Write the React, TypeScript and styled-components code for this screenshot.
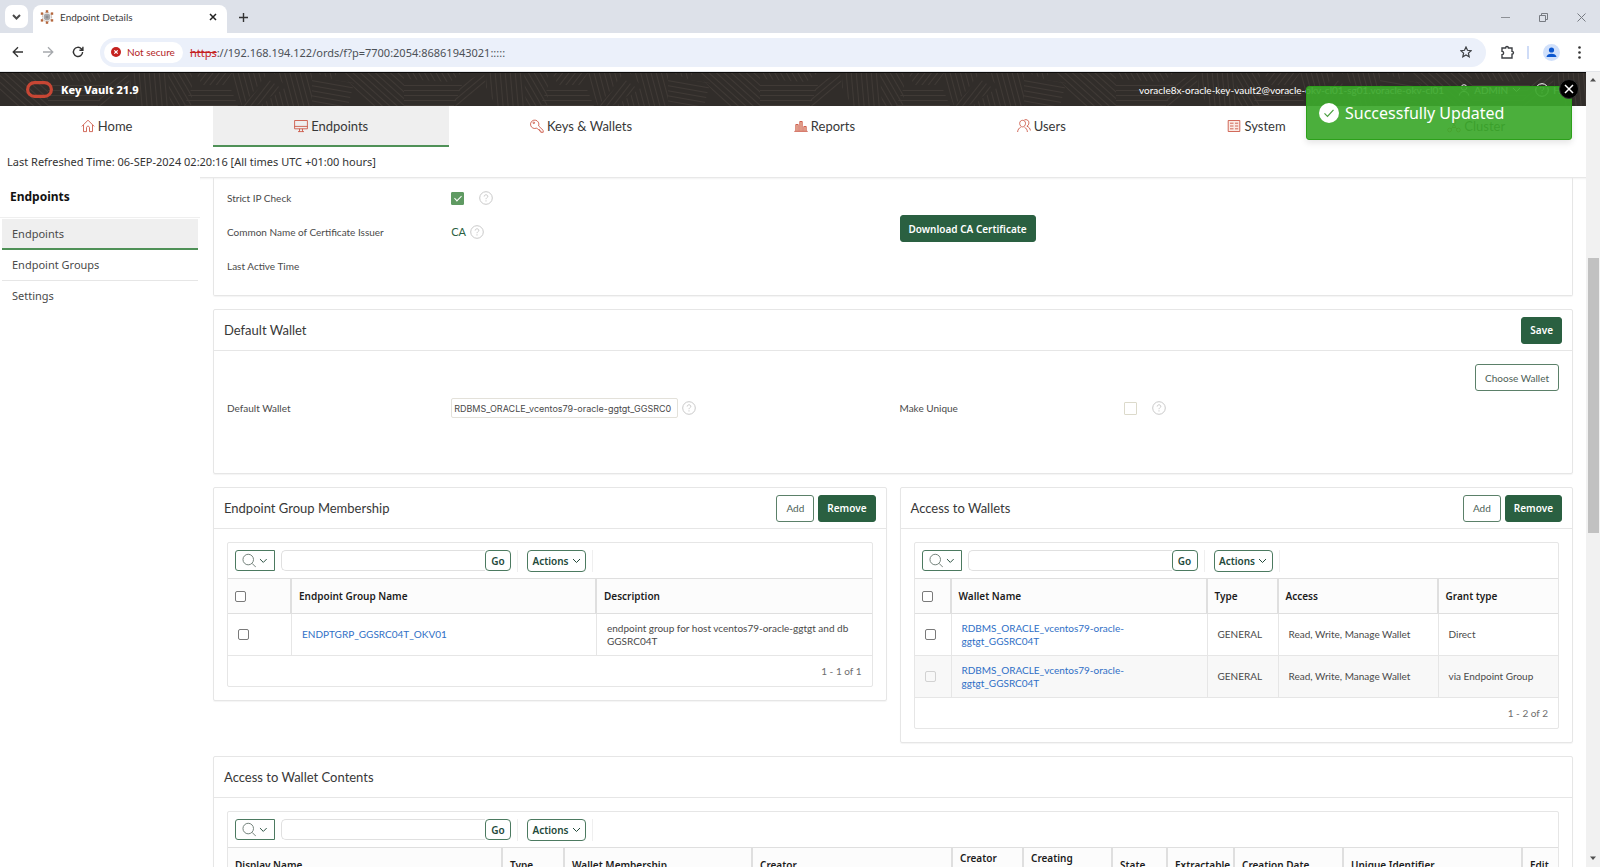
import React, { useId } from "react";
import styled, { createGlobalStyle, css } from "styled-components";

const color = {
  green: "#2a6041",
  accent: "#4f9157",
  line: "#e6e6e6",
  headLine: "#dfdfdf",
  red: "#c74634",
  link: "#2f6fc6",
  text: "#4a4a4a",
};
const bodyFont = `"Noto Sans", "Segoe UI", sans-serif`;
const smallFont = `Lato, "Segoe UI", sans-serif`;

const GlobalStyle = createGlobalStyle`
  *, *::before, *::after { box-sizing: border-box; }
  body { margin: 0; background: #fff; color: ${color.text}; font-family: ${bodyFont}; font-size: 11px; }
  button, input { font: inherit; color: inherit; margin: 0; }
  button { cursor: pointer; }
  a { color: inherit; text-decoration: none; }
  h1, h2, p, ul { margin: 0; padding: 0; font-weight: 400; }
  ul { list-style: none; }
`;

/* ---------- browser frame ---------- */

const Window = styled.div`
  display: flex;
  flex-direction: column;
  height: 100vh;
  overflow: hidden;
`;

const TabStrip = styled.div`
  display: flex;
  align-items: flex-end;
  flex: none;
  height: 33px;
  padding-left: 5px;
  background: #dde1e9;
`;

const IconButton = styled.button<{ $w?: number; $h?: number }>`
  display: flex;
  align-items: center;
  justify-content: center;
  flex: none;
  width: ${(p) => p.$w ?? 30}px;
  height: ${(p) => p.$h ?? 28}px;
  padding: 0;
  border: 0;
  background: transparent;
`;

const TabSearch = styled(IconButton)`
  margin-bottom: 5px;
  border-radius: 7px;
  background: #fff;
`;

const BrowserTab = styled.div`
  display: flex;
  align-items: center;
  gap: 6px;
  width: 194px;
  height: 28px;
  margin-left: 5px;
  padding: 0 7px;
  padding-bottom: 4px;
  border-radius: 8px 8px 0 0;
  background: #fff;
  font: 10px/14px ${smallFont};
  color: #3c3c3c;
`;

const TabTitle = styled.span`
  flex: 1;
`;

const NewTab = styled(IconButton)`
  margin-bottom: 2px;
`;

const WindowButtons = styled.div`
  display: flex;
  gap: 10px;
  margin-left: auto;
  padding: 0 5px 2px 0;
`;

const AddressRow = styled.div`
  display: flex;
  align-items: center;
  flex: none;
  height: 39px;
  padding: 0 7px 0 3px;
  border-bottom: 1px solid #e3e5e9;
  background: #fff;
`;

const AddressBar = styled.div`
  display: flex;
  align-items: center;
  flex: 1;
  height: 29px;
  margin: 0 6px 0 7px;
  padding: 0 5px 0 4px;
  border-radius: 15px;
  background: #ebf0fa;
  color: #4c5157;
`;

const SecurityChip = styled.button`
  display: flex;
  align-items: center;
  gap: 6px;
  height: 21px;
  margin-right: 7px;
  padding: 0 8px 0 7px;
  border: 0;
  border-radius: 11px;
  background: #fff;
  color: #b3261e;
  font: 10px/14px ${smallFont};
`;

const Scheme = styled.s`
  color: #c5221f;
`;

const AddressInput = styled.input`
  flex: 1;
  padding: 0;
  border: 0;
  outline: 0;
  background: transparent;
`;

const ToolbarDivider = styled.span`
  width: 2px;
  height: 13px;
  margin: 0 8px 0 5px;
  background: #cfdcf7;
`;

const Viewport = styled.div`
  display: flex;
  flex: 1;
  min-height: 0;
`;

const ScrollTrack = styled.div`
  display: flex;
  flex-direction: column;
  align-items: center;
  width: 14px;
  padding: 5px 0 6px;
  background: #f1f1f1;
`;
const ScrollGap = styled.div<{ $grow: number }>`
  flex: ${(p) => p.$grow} 0 0;
`;
const ScrollThumb = styled.div`
  flex: 274 0 0;
  width: 11px;
  background: #c1c1c1;
`;

/* ---------- application frame ---------- */

const AppPage = styled.div`
  position: relative;
  display: flex;
  flex-direction: column;
  flex: 1;
  min-width: 0;
`;

const Banner = styled.header`
  position: relative;
  display: flex;
  align-items: center;
  flex: none;
  height: 34px;
  padding: 0 12px 0 26px;
  border-top: 1px solid #0c0b0a;
  background: #312d2a;
  color: #fff;
`;

const BannerArt = styled.svg`
  position: absolute;
  inset: 0;
  width: 100%;
  height: 100%;
`;

const Product = styled.h1`
  display: flex;
  align-items: center;
  gap: 8px;
  position: relative;
  font-size: 11px;
  line-height: 16px;
  font-weight: 800;
`;

const Account = styled.div`
  position: relative;
  display: flex;
  align-items: center;
  gap: 14px;
  margin-left: auto;
  font: 10px/14px ${smallFont};
`;

const AccountLink = styled.button`
  display: flex;
  align-items: center;
  gap: 4px;
  padding: 0;
  border: 0;
  background: transparent;
`;

const MainNav = styled.nav`
  display: flex;
  flex: none;
  height: 41px;
`;

const NavLink = styled.a<{ $active?: boolean }>`
  display: flex;
  align-items: center;
  justify-content: center;
  gap: 3px;
  flex: 1 1 auto;
  border-bottom: 2px solid transparent;
  color: #383838;
  font: 13px/18px ${smallFont};
  ${(p) =>
    p.$active &&
    css`
      border-bottom-color: ${color.accent};
      background: #efefef;
    `}
`;

const Refreshed = styled.p`
  flex: none;
  height: 30px;
  padding: 7px 7px 0;
  line-height: 16px;
  color: #333;
`;

const Columns = styled.div`
  display: flex;
  flex: 1;
  min-height: 0;
`;

const Sidebar = styled.aside`
  flex: none;
  width: 200px;
`;

const SidebarTitle = styled.h2`
  height: 41px;
  padding: 12px 10px;
  border-bottom: 1px solid #efefef;
  font-size: 12px;
  line-height: 16px;
  font-weight: 700;
  color: #111;
`;

const SidebarList = styled.ul`
  padding: 1px 2px;
`;

const SidebarLink = styled.a<{ $active?: boolean }>`
  display: block;
  height: 31px;
  padding: 7px 10px 0;
  border-bottom: 1px solid ${color.line};
  line-height: 16px;
  li:last-child & {
    border-bottom: 0;
  }
  ${(p) =>
    p.$active &&
    css`
      border-bottom: 2px solid ${color.accent};
      background: #efefef;
    `}
`;

const Content = styled.main`
  display: flex;
  flex-direction: column;
  gap: 13px;
  flex: 1;
  min-width: 0;
  overflow: hidden;
  padding: 0 13px;
  border-top: 1px solid #e8e8e8;
  box-shadow: inset 0 2px 2px -1px #f2f2f2;
  font: 10px/14px ${smallFont};
`;

const Card = styled.section<{ $cut?: boolean }>`
  flex: none;
  border: 1px solid ${color.line};
  border-radius: 2px;
  box-shadow: 0 1px 1px #f4f4f4;
  ${(p) =>
    p.$cut &&
    css`
      border-top: 0;
      border-radius: 0 0 2px 2px;
    `}
`;

const CardHeader = styled.div`
  display: flex;
  align-items: center;
  gap: 4px;
  height: 41px;
  padding: 0 10px;
  border-bottom: 1px solid ${color.line};
`;

const CardTitle = styled.h2`
  flex: 1;
  font: 13px/18px ${smallFont};
  color: #383838;
`;

const CardBody = styled.div`
  padding: 13px;
`;

const CardPair = styled.div`
  display: grid;
  grid-template-columns: 1fr 1fr;
  gap: 13px;
  align-items: start;
`;

const Button = styled.button<{ $primary?: boolean }>`
  height: 27px;
  padding: 0 9px;
  border: 1px solid #5b8069;
  border-radius: 3px;
  background: #fff;
  color: #4d6156;
  font: 10px/14px ${smallFont};
  ${(p) =>
    p.$primary &&
    css`
      padding: 0 8px;
      border-color: ${color.green};
      background: ${color.green};
      color: #fff;
      font: 600 10px/14px ${bodyFont};
    `}
`;

const Fields = styled.div`
  display: grid;
  grid-template-columns: 1fr 2fr 1fr 2fr;
  grid-auto-rows: 34px;
  align-items: center;
  padding: 3px 0 12px 13px;
`;

const FieldValue = styled.div<{ $gap?: number }>`
  display: flex;
  align-items: center;
  gap: ${(p) => p.$gap ?? 4}px;
`;

const IssuerName = styled.output`
  color: ${color.green};
  font-size: 11px;
`;

const DownloadCell = styled.div`
  grid-column: 3 / 5;
  align-self: start;
`;

const WalletBody = styled.div`
  padding: 13px 0 36px;
`;

const ChooseRow = styled.div`
  display: flex;
  justify-content: flex-end;
  padding-right: 13px;
`;

const WalletFields = styled(Fields)`
  padding-top: 0;
`;

const WalletInput = styled.input`
  width: 227px;
  height: 20px;
  padding: 0 2px;
  border: 1px solid #e3e1da;
  border-radius: 2px;
  background: #fff;
  font: 9px/14px Inter, ${bodyFont};
`;

const CheckBox = styled.input.attrs({ type: "checkbox" })`
  position: relative;
  flex: none;
  width: 13px;
  height: 13px;
  appearance: none;
  border: 1px solid #dcdacb;
  border-radius: 1px;
  background: #fff;
  &:checked {
    border-color: #5f9a62;
    background: #5f9a62;
  }
  &:checked::after {
    content: "";
    position: absolute;
    left: 4px;
    top: 1px;
    width: 4px;
    height: 7px;
    border: solid #fff;
    border-width: 0 1px 1px 0;
    transform: rotate(45deg);
  }
`;

const RowCheck = styled(CheckBox)`
  display: block;
  width: 11px;
  height: 11px;
  border-color: #7a7a7a;
  border-radius: 2px;
  &:disabled {
    border-color: #d2d2d2;
    background: #f8f8f8;
  }
`;

const HelpButton = styled(IconButton)`
  width: 14px;
  height: 14px;
`;

/* ---------- report ---------- */

const Report = styled.div`
  border: 1px solid ${color.line};
  border-radius: 2px;
`;

const ReportTools = styled.div`
  display: flex;
  align-items: center;
  height: 35px;
  padding: 0 7px;
`;

const ToolButton = styled.button`
  display: flex;
  align-items: center;
  justify-content: center;
  gap: 3px;
  height: 21px;
  padding: 0 6px;
  border: 1px solid #4c7a60;
  border-radius: 4px;
  background: #fff;
  color: #23493a;
  font: 600 10px/14px ${bodyFont};
`;

const SearchMenu = styled(ToolButton)`
  width: 40px;
  margin-right: 6px;
  border-radius: 3px 0 0 3px;
`;

const GoButton = styled(ToolButton)`
  width: 26px;
  padding: 0;
`;

const ActionsButton = styled(ToolButton)`
  width: 59px;
  height: 22px;
  padding: 0;
`;

const SearchInput = styled.input`
  width: 204px;
  height: 21px;
  padding: 0 6px;
  border: 1px solid #e0e0e0;
  border-right: 0;
  border-radius: 5px 0 0 5px;
  background: #fff;
`;

const ToolDivider = styled.span`
  width: 1px;
  height: 22px;
  margin: 0 9px 0 6px;
  background: #efefef;
`;

const Table = styled.table`
  width: 100%;
  table-layout: fixed;
  border-collapse: separate;
  border-spacing: 0;
`;

const Th = styled.th`
  height: 36px;
  padding: 0 7px;
  border: solid ${color.headLine};
  border-width: 1px 2px 1px 0;
  background: #fcfcfc;
  color: #1c1c1c;
  font: 600 10px/14px ${bodyFont};
  text-align: left;
  &:last-child {
    border-right-width: 0;
  }
`;

const Td = styled.td`
  height: 42px;
  padding: 0 10px;
  border: solid ${color.line};
  border-width: 0 1px 1px 0;
  line-height: 13px;
  &:last-child {
    border-right-width: 0;
  }
`;

const Row = styled.tr<{ $shaded?: boolean }>`
  background: ${(p) => (p.$shaded ? "#f8f8f8" : "#fff")};
`;

const TextLink = styled.a`
  color: ${color.link};
`;

const RowCount = styled.p`
  height: 30px;
  padding: 8px 10px;
  text-align: right;
  color: #6e6e6e;
`;

/* ---------- toast ---------- */

const Toast = styled.div`
  position: absolute;
  top: 14px;
  right: 14px;
  display: flex;
  align-items: center;
  gap: 6px;
  width: 266px;
  height: 54px;
  padding: 0 12px;
  border: 1px solid #2ca01a;
  border-radius: 3px;
  background: rgba(60, 168, 43, 0.92);
  box-shadow: 0 3px 6px rgba(0, 0, 0, 0.1);
  color: #fff;
  font-size: 16px;
`;

const ToastClose = styled.button`
  position: absolute;
  top: -8px;
  right: -8px;
  display: flex;
  align-items: center;
  justify-content: center;
  width: 20px;
  height: 20px;
  padding: 0;
  border: 1px solid #333;
  border-radius: 50%;
  background: #000;
`;

/* ---------- drawings ---------- */

type GlyphProps = { size?: number; stroke?: string; width?: number; box?: number; children: React.ReactNode };
const Glyph = ({ size = 14, stroke = "currentColor", width = 1, box = 14, children }: GlyphProps) => (
  <svg width={size} height={size} viewBox={`0 0 ${box} ${box}`} fill="none" stroke={stroke} strokeWidth={width} aria-hidden="true">
    {children}
  </svg>
);

const Chevron = ({ size = 9, width = 1 }: { size?: number; width?: number }) => (
  <Glyph size={size} box={9} width={width}><path d="M1 3l3.5 3.5L8 3" /></Glyph>
);

const HelpGlyph = ({ stroke = "#c9c9c9" }: { stroke?: string }) => (
  <Glyph stroke={stroke}>
    <circle cx="7" cy="7" r="6.3" />
    <path d="M5.2 5.5c0-1 .8-1.7 1.8-1.7s1.8.7 1.8 1.6c0 1.2-1.8 1.4-1.8 2.8M7 9.3v1.2" />
  </Glyph>
);

const MagnifierGlyph = () => (
  <Glyph size={15} box={15} stroke="#6f7d76"><circle cx="6.5" cy="6.5" r="5.5" /><path d="M10.5 10.5l4 4" /></Glyph>
);

const Favicon = () => (
  <svg width="14" height="14" viewBox="0 0 14 14" aria-hidden="true">
    <circle cx="7" cy="7" r="4.6" fill="none" stroke="#b9aaa0" strokeDasharray="1.4 1" />
    <circle cx="7" cy="7" r="3.4" fill="#a9a9ab" />
    <path d="M5.5 7h3M7 5.5v3" stroke="#808084" />
    {[[7, 1.4], [12, 3.6], [12, 10.4], [7, 12.6], [2, 10.4], [2, 3.6]].map(([x, y]) => (
      <rect key={`${x}-${y}`} x={x - 1.2} y={y - 1.2} width="2.4" height="2.4" fill="#b5673d" />
    ))}
  </svg>
);

const navGlyphs: Record<string, React.ReactNode> = {
  Home: <path d="M.8 7.4L7 1.2l6.2 6.2M2.5 6v6.6h3V8.8c0-1 .6-1.6 1.5-1.6s1.5.6 1.5 1.6v3.8h3V6" />,
  Endpoints: <path d="M.6 1.5h12.8v8.3H.6zM.6 7.4h12.8M5.5 9.8v2.7M8.5 9.8v2.7M4 12.6h6" />,
  "Keys & Wallets": (
    <>
      <path d="M8.6 6.9l4.6 4.5v1.9h-2.4v-1.4H9.5v-1.3H8.2L6.7 9" />
      <path d="M6.7 9A4.2 4.2 0 1 1 8.6 6.9" />
      <circle cx="3.8" cy="3.8" r=".8" />
    </>
  ),
  Reports: (
    <>
      <path d="M1.8 12V5.5h2.4V12M5.8 12V2.500h2.4V12M9.8 12V7.500h2.4V12" fill="#e9b8a4" />
      <path d="M.3 12.4h13.4" />
    </>
  ),
  Users: (
    <>
      <path d="M5.6 1.3c1.8 0 2.9 1.3 2.9 3.1S7.3 7.9 5.6 7.9 2.7 6.2 2.7 4.4s1.1-3.1 2.9-3.1zM.6 13c.2-2.4 1.4-3.9 3.2-4.9M10.4 13c-.1-2.2-1.2-3.8-3-4.9" />
      <path d="M7.400.9C9.8 0 11.9 1.4 11.9 3.8c0 1.6-.8 2.8-2 3.4 2 .8 3.2 2.2 3.5 4.3" />
    </>
  ),
  System: (
    <>
      <path d="M1.2 1.5h11.6v11H1.2z" fill="#fbeae4" />
      <path d="M3 4.2h3.5M3 7h3.5M3 9.8h3.5M8 4.2h3.2M8 7h3.2M8 9.8h3.2" />
    </>
  ),
  Cluster: (
    <>
      <circle cx="7" cy="3" r="1.9" /><circle cx="2.6" cy="11" r="1.9" /><circle cx="11.4" cy="11" r="1.9" /><circle cx="7" cy="7.4" r="1.3" />
      <path d="M7 5v1M6 8.3L4 9.700M8 8.300l2 1.400" />
    </>
  ),
};

const hatches = [10, 42, 0, -40, 85, 60, -52, 75];
const patches: [number, string][] = [
  [0, "0,4 42,10 36,33 0,33"],
  [7, "4,0 26,0 20,6"],
  [1, "30,0 92,0 92,33 58,33 36,8"],
  [2, "92,8 150,12 142,33 92,33"],
  [5, "94,0 150,0 138,9 94,6"],
  [3, "150,10 172,0 174,12 148,33 140,33"],
  [4, "174,0 212,0 212,33 184,33 174,14"],
  [5, "212,0 236,0 236,33 214,33"],
  [2, "236,14 274,14 282,33 228,33"],
  [6, "240,0 276,0 268,12 246,12"],
  [7, "276,0 312,0 286,33 280,18"],
  [6, "312,6 326,16 300,33 286,33"],
  [7, "318,0 356,0 356,33 304,33 330,14"],
];

const BannerPattern = () => {
  const id = useId();
  return (
    <BannerArt aria-hidden="true">
      <defs>
        {hatches.map((angle, i) => (
          <pattern key={angle} id={`${id}h${i}`} width="5" height="5" patternUnits="userSpaceOnUse" patternTransform={`rotate(${angle})`}>
            <path d="M0 2.5h5" stroke="#403a36" />
          </pattern>
        ))}
        <pattern id={`${id}tile`} x="-44" width="356" height="33" patternUnits="userSpaceOnUse">
          {patches.map(([h, points]) => (
            <polygon key={points} points={points} fill={`url(#${id}h${h})`} />
          ))}
        </pattern>
      </defs>
      <rect width="100%" height="100%" fill={`url(#${id}tile)`} />
    </BannerArt>
  );
};

/* ---------- parts ---------- */

const Help = ({ about }: { about: string }) => (
  <HelpButton aria-label={`Help for ${about}`}><HelpGlyph /></HelpButton>
);

const Tools = ({ name }: { name: string }) => (
  <ReportTools>
    <SearchMenu aria-label={`Select columns to search in ${name}`}><MagnifierGlyph /><Chevron /></SearchMenu>
    <SearchInput type="text" aria-label={`Search ${name}`} />
    <GoButton>Go</GoButton>
    <ToolDivider />
    <ActionsButton>Actions<Chevron /></ActionsButton>
    <ToolDivider />
  </ReportTools>
);

type Column = { label: React.ReactNode; width: string };
const ReportTable = ({ columns, children }: { columns: Column[]; children?: React.ReactNode }) => (
  <Table>
    <colgroup>{columns.map((c, i) => <col key={i} style={{ width: c.width }} />)}</colgroup>
    <thead><tr>{columns.map((c, i) => <Th key={i} scope="col">{c.label}</Th>)}</tr></thead>
    <tbody>{children}</tbody>
  </Table>
);

const groupColumns: Column[] = [
  { label: <RowCheck aria-label="Select all groups" />, width: "64px" },
  { label: "Endpoint Group Name", width: "305px" },
  { label: "Description", width: "auto" },
];

const walletColumns: Column[] = [
  { label: <RowCheck aria-label="Select all wallets" />, width: "37px" },
  { label: "Wallet Name", width: "256px" },
  { label: "Type", width: "71px" },
  { label: "Access", width: "160px" },
  { label: "Grant type", width: "auto" },
];

const contentColumns: Column[] = [
  { label: "Display Name", width: "275px" },
  { label: "Type", width: "62px" },
  { label: "Wallet Membership", width: "188px" },
  { label: "Creator", width: "200px" },
  { label: <>Creator<br />Type</>, width: "71px" },
  { label: <>Creating<br />Cluster</>, width: "89px" },
  { label: "State", width: "55px" },
  { label: "Extractable", width: "67px" },
  { label: "Creation Date", width: "109px" },
  { label: "Unique Identifier", width: "auto" },
  { label: "Edit", width: "35px" },
];

const walletGrants = [
  { access: "Read, Write, Manage Wallet", grant: "Direct", locked: false },
  { access: "Read, Write, Manage Wallet", grant: "via Endpoint Group", locked: true },
];

export default function App() {
  return (
    <Window>
      <GlobalStyle />
      <TabStrip>
        <TabSearch $w={23} $h={23} aria-label="Search tabs"><Chevron width={2} /></TabSearch>
        <BrowserTab>
          <Favicon />
          <TabTitle>Endpoint Details</TabTitle>
          <IconButton $w={14} $h={14} aria-label="Close tab">
            <Glyph size={8} box={8} stroke="#222" width={1.5}><path d="M1 1l6 6M7 1L1 7" /></Glyph>
          </IconButton>
        </BrowserTab>
        <NewTab $w={32} aria-label="New tab">
          <Glyph size={9} box={9} stroke="#333" width={1.4}><path d="M4.5 0v9M0 4.5h9" /></Glyph>
        </NewTab>
        <WindowButtons>
          <IconButton $w={28} aria-label="Minimize"><Glyph size={9} box={9} stroke="#8d9096"><path d="M0 4.5h9" /></Glyph></IconButton>
          <IconButton $w={28} aria-label="Restore"><Glyph size={9} box={9} stroke="#777b82"><path d="M.5 2.5h6v6h-6zM2.5 2.5v-2h6v6h-2" /></Glyph></IconButton>
          <IconButton $w={28} aria-label="Close"><Glyph size={9} box={9} stroke="#777b82"><path d="M.5.5l8 8M8.5.5l-8 8" /></Glyph></IconButton>
        </WindowButtons>
      </TabStrip>

      <AddressRow>
        <IconButton aria-label="Back"><Glyph size={12} box={12} stroke="#333" width={1.3}><path d="M11 6H1.5M6 1.2L1.2 6 6 10.8" /></Glyph></IconButton>
        <IconButton aria-label="Forward"><Glyph size={12} box={12} stroke="#a6a9ad" width={1.3}><path d="M1 6h9.5M6 1.2L10.8 6 6 10.8" /></Glyph></IconButton>
        <IconButton aria-label="Reload"><Glyph size={12} box={12} stroke="#333" width={1.4}><path d="M10.6 6A4.6 4.6 0 1 1 9.3 2.7L10.8 4.2M10.9.8v3.5H7.4" /></Glyph></IconButton>
        <AddressBar>
          <SecurityChip>
            <svg width="10" height="10" viewBox="0 0 10 10" aria-hidden="true"><circle cx="5" cy="5" r="5" fill="#c5221f" /><path d="M3.3 3.3l3.4 3.4M6.7 3.3L3.3 6.7" stroke="#fff" strokeWidth="1.2" /></svg>
            Not secure
          </SecurityChip>
          <Scheme>https</Scheme>
          <AddressInput aria-label="Address" defaultValue="://192.168.194.122/ords/f?p=7700:2054:86861943021:::::" />
          <IconButton aria-label="Bookmark"><Glyph size={12} box={12} stroke="#3c3f43" width={1.2}><path d="M6 1l1.5 3.3 3.6.4-2.7 2.4.8 3.6L6 8.9l-3.2 1.8.8-3.6L.9 4.7l3.6-.4z" /></Glyph></IconButton>
        </AddressBar>
        <IconButton aria-label="Extensions"><Glyph size={15} box={15} stroke="#3c3f43" width={1.4}><path d="M2 3h3.6c0-2 2.8-2 2.8 0H12v3.4c2 0 2 2.8 0 2.8V13H2V9.6c2.2 0 2.2-3.2 0-3.2z" /></Glyph></IconButton>
        <ToolbarDivider />
        <IconButton $w={28} aria-label="Profile">
          <svg width="17" height="17" viewBox="0 0 17 17" aria-hidden="true"><circle cx="8.5" cy="8.5" r="8.5" fill="#d0e0fb" /><circle cx="8.5" cy="6" r="2.6" fill="#0b57d0" /><path d="M3.5 13c0-4.5 10-4.5 10 0z" fill="#0b57d0" /></svg>
        </IconButton>
        <IconButton $w={28} aria-label="Menu">
          <svg width="3" height="13" viewBox="0 0 3 13" fill="#333" aria-hidden="true"><circle cx="1.5" cy="1.5" r="1.3" /><circle cx="1.5" cy="6.5" r="1.3" /><circle cx="1.5" cy="11.5" r="1.3" /></svg>
        </IconButton>
      </AddressRow>

      <Viewport>
        <AppPage>
          <Banner>
            <BannerPattern />
            <Product>
              <svg width="27" height="17" viewBox="0 0 27 17" fill="none" aria-hidden="true"><rect x="1.6" y="1.6" width="23.8" height="13.8" rx="6.9" stroke="#c74634" strokeWidth="3.2" /></svg>
              Key Vault 21.9
            </Product>
            <Account>
              <span>voracle8x-oracle-key-vault2@voracle-okv-cl01-sg01.voracle-okv-cl01</span>
              <AccountLink>
                <Glyph size={12} stroke="#fff"><circle cx="7" cy="4" r="3.2" /><path d="M1.5 13.5c.4-3 2.2-4.8 5.5-4.8s5.1 1.8 5.5 4.8" /></Glyph>
                ADMIN
                <Chevron />
              </AccountLink>
              <AccountLink><HelpGlyph stroke="#fff" />Help</AccountLink>
            </Account>
          </Banner>

          <MainNav aria-label="Main">
            {Object.entries(navGlyphs).map(([name, glyph]) => (
              <NavLink key={name} href="#" $active={name === "Endpoints"}>
                <Glyph stroke={color.red} width={0.8}>{glyph}</Glyph>
                {name}
              </NavLink>
            ))}
          </MainNav>
          <Refreshed>Last Refreshed Time: 06-SEP-2024 02:20:16 [All times UTC +01:00 hours]</Refreshed>

          <Columns>
            <Sidebar>
              <SidebarTitle>Endpoints</SidebarTitle>
              <SidebarList>
                <li><SidebarLink href="#" $active>Endpoints</SidebarLink></li>
                <li><SidebarLink href="#">Endpoint Groups</SidebarLink></li>
                <li><SidebarLink href="#">Settings</SidebarLink></li>
              </SidebarList>
            </Sidebar>

            <Content>
              <Card $cut>
                <Fields>
                  <label htmlFor="strict-ip">Strict IP Check</label>
                  <FieldValue $gap={15}><CheckBox id="strict-ip" defaultChecked /><Help about="Strict IP Check" /></FieldValue>
                  <span /><span />
                  <label htmlFor="issuer">Common Name of Certificate Issuer</label>
                  <FieldValue><IssuerName id="issuer">CA</IssuerName><Help about="Common Name of Certificate Issuer" /></FieldValue>
                  <DownloadCell><Button $primary>Download CA Certificate</Button></DownloadCell>
                  <span>Last Active Time</span>
                </Fields>
              </Card>

              <Card>
                <CardHeader><CardTitle>Default Wallet</CardTitle><Button $primary>Save</Button></CardHeader>
                <WalletBody>
                  <ChooseRow><Button>Choose Wallet</Button></ChooseRow>
                  <WalletFields>
                    <label htmlFor="default-wallet">Default Wallet</label>
                    <FieldValue><WalletInput id="default-wallet" defaultValue="RDBMS_ORACLE_vcentos79-oracle-ggtgt_GGSRC0" /><Help about="Default Wallet" /></FieldValue>
                    <label htmlFor="make-unique">Make Unique</label>
                    <FieldValue $gap={15}><CheckBox id="make-unique" /><Help about="Make Unique" /></FieldValue>
                  </WalletFields>
                </WalletBody>
              </Card>

              <CardPair>
                <Card>
                  <CardHeader><CardTitle>Endpoint Group Membership</CardTitle><Button>Add</Button><Button $primary>Remove</Button></CardHeader>
                  <CardBody>
                    <Report>
                      <Tools name="Endpoint Group Membership" />
                      <ReportTable columns={groupColumns}>
                        <Row>
                          <Td><RowCheck aria-label="Select ENDPTGRP_GGSRC04T_OKV01" /></Td>
                          <Td><TextLink href="#">ENDPTGRP_GGSRC04T_OKV01</TextLink></Td>
                          <Td>endpoint group for host vcentos79-oracle-ggtgt and db GGSRC04T</Td>
                        </Row>
                      </ReportTable>
                      <RowCount>1 - 1 of 1</RowCount>
                    </Report>
                  </CardBody>
                </Card>

                <Card>
                  <CardHeader><CardTitle>Access to Wallets</CardTitle><Button>Add</Button><Button $primary>Remove</Button></CardHeader>
                  <CardBody>
                    <Report>
                      <Tools name="Access to Wallets" />
                      <ReportTable columns={walletColumns}>
                        {walletGrants.map((g) => (
                          <Row key={g.grant} $shaded={g.locked}>
                            <Td><RowCheck disabled={g.locked} aria-label={`Select wallet granted ${g.grant}`} /></Td>
                            <Td><TextLink href="#">RDBMS_ORACLE_vcentos79-oracle-<br />ggtgt_GGSRC04T</TextLink></Td>
                            <Td>GENERAL</Td>
                            <Td>{g.access}</Td>
                            <Td>{g.grant}</Td>
                          </Row>
                        ))}
                      </ReportTable>
                      <RowCount>1 - 2 of 2</RowCount>
                    </Report>
                  </CardBody>
                </Card>
              </CardPair>

              <Card>
                <CardHeader><CardTitle>Access to Wallet Contents</CardTitle></CardHeader>
                <CardBody>
                  <Report>
                    <Tools name="Access to Wallet Contents" />
                    <ReportTable columns={contentColumns} />
                  </Report>
                </CardBody>
              </Card>
            </Content>
          </Columns>

          <Toast role="status">
            <svg width="20" height="20" viewBox="0 0 20 20" fill="none" aria-hidden="true"><circle cx="10" cy="10" r="10" fill="#fff" /><path d="M5.5 10.4l3 3 6-6.6" stroke="#4a9f3f" strokeWidth="1.2" /></svg>
            Successfully Updated
            <ToastClose aria-label="Dismiss"><Glyph size={10} box={10} stroke="#fff" width={1.5}><path d="M1 1l8 8M9 1L1 9" /></Glyph></ToastClose>
          </Toast>
        </AppPage>

        <ScrollTrack aria-hidden="true">
          <svg width="6" height="5" viewBox="0 0 6 5" fill="#505050"><path d="M0 4.5L3 1l3 3.5z" /></svg>
          <ScrollGap $grow={176} />
          <ScrollThumb />
          <ScrollGap $grow={323} />
          <svg width="6" height="5" viewBox="0 0 6 5" fill="#505050"><path d="M0 .5L3 4 6 .5z" /></svg>
        </ScrollTrack>
      </Viewport>
    </Window>
  );
}
